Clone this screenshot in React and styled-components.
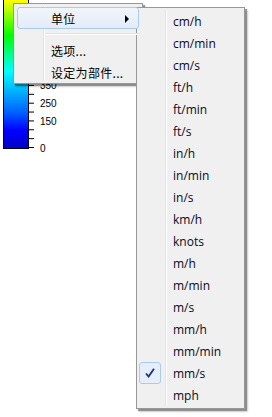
import React from 'react'
import styled, { createGlobalStyle } from 'styled-components'

const GlobalStyle = createGlobalStyle`
  html, body {
    margin: 0;
    padding: 0;
    background: #ffffff;
  }
  body {
    font-family: "Open Sans", "Noto Sans CJK SC", sans-serif;
  }
`

const Page = styled.div`
  position: relative;
  width: 272px;
  height: 417px;
  overflow: hidden;
`

const Legend = styled.div`
  display: flex;
  align-items: flex-start;
  margin-left: 3px;
`

const Bar = styled.div`
  box-sizing: border-box;
  width: 26px;
  height: 149px;
  border: 1px solid #000;
  border-top: none;
  background: linear-gradient(
    to bottom,
    #ffff00 0%,
    #80ff00 12%,
    #00ff00 24%,
    #00ff80 36%,
    #00ffff 48%,
    #00b0ff 62%,
    #0060ff 76%,
    #0000ff 88%,
    #0000c8 100%
  );
`

const Axis = styled.svg`
  display: block;
  font-family: "Liberation Sans", Arial, sans-serif;
  font-size: 10px;
`

const Menu = styled.div`
  position: absolute;
  left: ${(p) => p.left}px;
  top: ${(p) => p.top}px;
  width: ${(p) => p.width}px;
  box-sizing: border-box;
  padding: ${(p) => p.pad};
  background: #f0f0f0;
  border: 1px solid #979797;
  box-shadow: 2px 2px 1px rgba(0, 0, 0, 0.35), 3px 3px 2px rgba(0, 0, 0, 0.15);
  &::before {
    content: '';
    position: absolute;
    top: 2px;
    bottom: 2px;
    left: ${(p) => p.gutter}px;
    width: 1px;
    background: #e2e3e3;
    border-right: 1px solid #ffffff;
  }
`

const Item = styled.div`
  position: relative;
  z-index: 1;
  display: flex;
  align-items: center;
  height: 22px;
  box-sizing: border-box;
  padding-left: ${(p) => p.indent}px;
  font-size: 12px;
  color: #000;
  border: 1px solid ${(p) => (p.active ? '#aacbee' : 'transparent')};
  border-radius: 3px;
  background: ${(p) =>
    p.active ? 'linear-gradient(to bottom, #f1f5fb, #e3ecf8)' : 'transparent'};
`

const CjkLabel = styled.span`
  font-family: "Noto Sans CJK SC", sans-serif;
  font-size: 12px;
  letter-spacing: 0.3px;
`

const Arrow = styled.span`
  position: absolute;
  left: 107px;
  top: 7px;
  width: 0;
  height: 0;
  border-top: 4px solid transparent;
  border-bottom: 4px solid transparent;
  border-left: 4px solid #000;
`

const Separator = styled.div`
  position: relative;
  z-index: 1;
  height: 1px;
  margin: 4px 0 4px 30px;
  background: #e0e0e0;
  border-bottom: 1px solid #ffffff;
`

const UnitLabel = styled.span`
  font-family: "Open Sans", "Noto Sans", sans-serif;
  font-size: 12px;
  color: #0a0a1e;
`

const CheckBox = styled.span`
  position: absolute;
  left: -1px;
  top: -1px;
  width: 22px;
  height: 22px;
  box-sizing: border-box;
  border: 1px solid #a8cdef;
  border-radius: 3px;
  background: #e6eefa;
  display: flex;
  align-items: center;
  justify-content: center;
`

const units = [
  'cm/h', 'cm/min', 'cm/s', 'ft/h', 'ft/min', 'ft/s', 'in/h', 'in/min', 'in/s',
  'km/h', 'knots', 'm/h', 'm/min', 'm/s', 'mm/h', 'mm/min', 'mm/s', 'mph',
]

const ticks = [0, 1, 2, 3, 4, 5, 6, 7, 8, 9, 10, 11, 12, 13, 14, 15, 16]
const labels = { 0: '0', 3: '150', 5: '250', 7: '350' }

export default function App() {
  return (
    <Page>
      <GlobalStyle />
      <Legend>
        <Bar />
        <Axis width="60" height="160">
          {ticks.map((t) => {
            const y = 147.5 - t * 8.86
            return (
              <g key={t}>
                <line x1="0" x2="5" y1={y} y2={y} stroke="#000" strokeWidth="1" />
                {labels[t] && (
                  <text x="11" y={y + 4} fill="#000">
                    {labels[t]}
                  </text>
                )}
              </g>
            )
          })}
        </Axis>
      </Legend>

      <Menu left={13} top={3} width={130} pad="3px 3px 0" gutter={29}>
        <Item indent={33} active>
          <CjkLabel>单位</CjkLabel>
          <Arrow />
        </Item>
        <Separator />
        <Item indent={33}>
          <CjkLabel>选项...</CjkLabel>
        </Item>
        <Item indent={33}>
          <CjkLabel>设定为部件...</CjkLabel>
        </Item>
      </Menu>

      <Menu left={136} top={7} width={109} pad="2px" gutter={28}>
        {units.map((u) => (
          <Item key={u} indent={33}>
            {u === 'mm/s' && (
              <CheckBox>
                <svg width="12" height="12" viewBox="0 0 12 12">
                  <path d="M2 6.5 L4.6 9.5 L10 1.8" fill="none" stroke="#1c2f8a" strokeWidth="1.8" strokeLinejoin="miter" />
                </svg>
              </CheckBox>
            )}
            <UnitLabel>{u}</UnitLabel>
          </Item>
        ))}
      </Menu>
    </Page>
  )
}
